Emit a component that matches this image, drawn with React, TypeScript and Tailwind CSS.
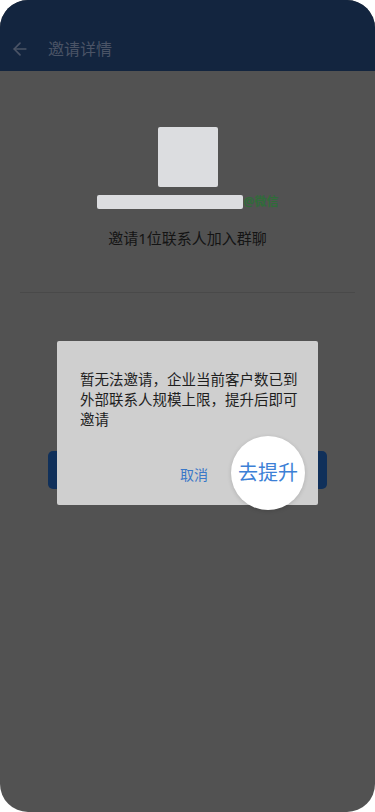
import { ArrowLeft } from "lucide-react";

const font = { fontFamily: '"Noto Sans", "Noto Sans CJK SC", sans-serif' };

function Header() {
  return (
    <div className="flex h-[71px] shrink-0 items-end bg-[#13253f] pb-[12px]">
      <div className="flex items-center">
        <ArrowLeft className="ml-[10px] h-[20px] w-[20px] text-[#4b5466]" strokeWidth={2} />
        <span className="ml-[18px] text-[16px] leading-[20px] text-[#4b5466]">邀请详情</span>
      </div>
    </div>
  );
}

function Dialog() {
  return (
    <div className="absolute left-[57px] top-[341px] h-[164px] w-[261px] rounded-[2px] bg-[#cfcfcf]">
      <p className="pl-[23px] pr-[18px] pt-[28px] text-[14.5px] leading-[20px] text-[#1e1e1e]">
        暂无法邀请，企业当前客户数已到外部联系人规模上限，提升后即可邀请
      </p>
      <div className="absolute left-[123px] top-[125px] text-[14px] leading-[18px] text-[#3a78c8]">取消</div>
      {/* spotlight on the upgrade action */}
      <div className="absolute left-[174px] top-[95px] flex h-[74px] w-[74px] items-center justify-center rounded-full bg-white shadow-[0_1px_4px_rgba(0,0,0,0.15)]">
        <span className="text-[20px] leading-[24px] text-[#3c80d6]">去提升</span>
      </div>
    </div>
  );
}

export default function App() {
  return (
    <div className="h-[812px] w-[375px] bg-white" style={font}>
      <div className="relative flex h-full flex-col overflow-hidden rounded-[28px] bg-[#525252]">
        <Header />
        <div className="flex flex-col items-center">
          <div className="mt-[56px] h-[60px] w-[60px] rounded-[2px] bg-[#dcdde0]" />
          <div className="mt-[8px] flex items-center">
            <div className="h-[14px] w-[146px] rounded-[2px] bg-[#dcdde0]" />
            <span className="ml-[1px] text-[12px] font-bold leading-[14px] text-[#2f6c39]">@微信</span>
          </div>
          <div className="mt-[19px] text-[15px] leading-[20px] text-[#141414]">邀请1位联系人加入群聊</div>
          <div className="mt-[44px] h-px w-[335px] bg-[#494949]" />
          <div className="mt-[158px] h-[38px] w-[279px] rounded-[5px] bg-[#10305a]" />
        </div>
        <Dialog />
      </div>
    </div>
  );
}
